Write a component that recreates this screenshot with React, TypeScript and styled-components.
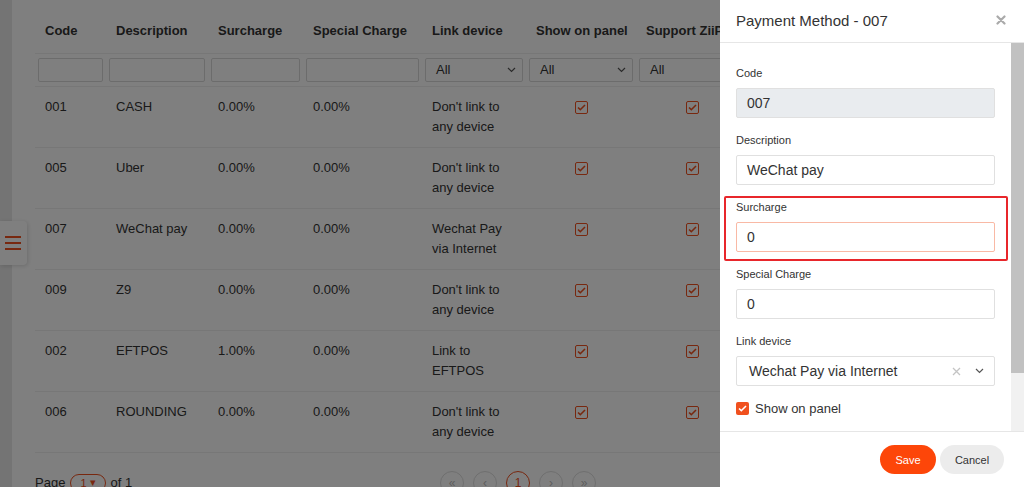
import React from 'react'
import styled, { createGlobalStyle } from 'styled-components'

const GlobalStyle = createGlobalStyle`
  html, body {
    margin: 0;
    padding: 0;
    background: #e8e8e8;
    font-family: 'Liberation Sans', Arial, sans-serif;
    color: #333;
  }
  * { box-sizing: border-box; }
`

const orange = '#f0501e'

interface Row {
  code: string
  description: string
  surcharge: string
  special: string
  link: string
}

const rows: Row[] = [
  { code: '001', description: 'CASH', surcharge: '0.00%', special: '0.00%', link: "Don't link to any device" },
  { code: '005', description: 'Uber', surcharge: '0.00%', special: '0.00%', link: "Don't link to any device" },
  { code: '007', description: 'WeChat pay', surcharge: '0.00%', special: '0.00%', link: 'Wechat Pay via Internet' },
  { code: '009', description: 'Z9', surcharge: '0.00%', special: '0.00%', link: "Don't link to any device" },
  { code: '002', description: 'EFTPOS', surcharge: '1.00%', special: '0.00%', link: 'Link to EFTPOS' },
  { code: '006', description: 'ROUNDING', surcharge: '0.00%', special: '0.00%', link: "Don't link to any device" },
]

const Page = styled.div`
  display: flex;
  height: 487px;
  overflow: hidden;
  padding-left: 12px;
`

const Card = styled.main`
  flex: 1;
  background: #fff;
  padding: 9px 23px 0;
  display: flex;
  flex-direction: column;
  overflow: hidden;
`

const Table = styled.table`
  border-collapse: collapse;
  table-layout: fixed;
  width: 840px;
  font-size: 13px;
`

const HeadCell = styled.th<{ $w: number }>`
  width: ${({ $w }) => $w}px;
  height: 44px;
  padding: 0 10px;
  text-align: left;
  font-weight: 700;
  white-space: nowrap;
  overflow: hidden;
  border-bottom: 1px solid #eee;
`

const FilterCell = styled.td`
  padding: 4px 3px;
  border-bottom: 1px solid #eee;
`

const FilterInput = styled.div`
  height: 24px;
  border: 1px solid #d9d9d9;
  border-radius: 2px;
  background: #fff;
`

const FilterSelect = styled(FilterInput)`
  display: flex;
  align-items: center;
  justify-content: space-between;
  padding: 0 6px 0 10px;
  font-size: 13px;
`

const Cell = styled.td<{ $center?: boolean }>`
  padding: 10px 10px;
  height: 61px;
  line-height: 20px;
  vertical-align: top;
  text-align: ${({ $center }) => ($center ? 'center' : 'left')};
  border-bottom: 1px solid #eee;
`

const OutlineCheck = styled.span`
  display: inline-flex;
  align-items: center;
  justify-content: center;
  width: 13px;
  height: 13px;
  margin-top: 4px;
  border: 1px solid ${orange};
  border-radius: 2px;
  background: #fff;
  vertical-align: top;
`

const Pager = styled.div`
  display: grid;
  grid-template-columns: 1fr auto 1fr;
  align-items: center;
  margin-top: 18px;
  font-size: 13px;
`

const PageInfo = styled.div`
  display: flex;
  align-items: center;
  gap: 5px;
`

const PagePill = styled.span`
  display: inline-flex;
  align-items: center;
  gap: 3px;
  height: 18px;
  padding: 0 9px;
  border: 1px solid ${orange};
  border-radius: 9px;
  color: ${orange};
  font-size: 11px;
`

const PageButtons = styled.div`
  display: flex;
  gap: 9px;
`

const PageButton = styled.span<{ $active?: boolean }>`
  width: 24px;
  height: 24px;
  border-radius: 50%;
  border: 1px solid ${({ $active }) => ($active ? orange : '#ddd')};
  color: ${({ $active }) => ($active ? orange : '#bbb')};
  display: flex;
  align-items: center;
  justify-content: center;
  font-size: 12px;
`

const MenuTab = styled.button`
  position: absolute;
  left: 0;
  top: 221px;
  width: 27px;
  height: 44px;
  border: none;
  border-radius: 0 4px 4px 0;
  background: #fff;
  box-shadow: 1px 1px 4px rgba(0, 0, 0, 0.15);
  display: flex;
  flex-direction: column;
  justify-content: center;
  gap: 4.5px;
  padding: 0 0 0 5px;
`

const MenuLine = styled.span`
  width: 16px;
  height: 1.5px;
  background: ${orange};
`

const Overlay = styled.div`
  position: fixed;
  inset: 0;
  background: rgba(0, 0, 0, 0.5);
`

const Drawer = styled.aside`
  position: fixed;
  top: 0;
  right: 0;
  bottom: 0;
  width: 304px;
  background: #fff;
  display: flex;
  flex-direction: column;
`

const DrawerHeader = styled.header`
  height: 43px;
  flex-shrink: 0;
  display: flex;
  align-items: center;
  justify-content: space-between;
  padding: 0 18px 2px 16px;
  border-bottom: 1px solid #e6e6e6;
  font-size: 15px;
`

const DrawerBody = styled.div`
  flex: 1;
  min-height: 0;
  display: flex;
`

const Form = styled.div`
  flex: 1;
  overflow: hidden;
  padding: 22px 16px 20px;
`

const ScrollTrack = styled.div`
  width: 13px;
  flex-shrink: 0;
  background: #f1f1f1;
`

const ScrollThumb = styled.div`
  height: 330px;
  background: #c1c1c1;
`

const Field = styled.div<{ $marked?: boolean }>`
  position: relative;
  margin-bottom: 14px;
  ${({ $marked }) =>
    $marked &&
    `
    &::after {
      content: '';
      position: absolute;
      top: -3px;
      bottom: -9px;
      left: -12px;
      right: -13px;
      border: 2px solid #e8262b;
      border-radius: 2px;
      pointer-events: none;
    }
  `}
`

const Label = styled.div`
  font-size: 11px;
  line-height: 16px;
  margin-bottom: 7px;
`

const Input = styled.div<{ $disabled?: boolean; $focused?: boolean }>`
  height: 30px;
  display: flex;
  align-items: center;
  padding: 0 10px;
  font-size: 14px;
  border: 1px solid ${({ $focused }) => ($focused ? '#f9b9a5' : '#e0e0e0')};
  border-radius: 2px;
  background: ${({ $disabled }) => ($disabled ? '#e9ecef' : '#fff')};
`

const Select = styled(Input)`
  padding: 0 10px 0 12px;
  gap: 14px;
  & > span:first-child {
    flex: 1;
  }
`

const CheckRow = styled.label`
  display: flex;
  align-items: center;
  gap: 6px;
  height: 16px;
  margin-bottom: 14px;
  font-size: 13px;
`

const FilledCheck = styled.span`
  width: 13px;
  height: 13px;
  border-radius: 2px;
  background: ${orange};
  display: flex;
  align-items: center;
  justify-content: center;
`

const DrawerFooter = styled.footer`
  flex-shrink: 0;
  display: flex;
  justify-content: flex-end;
  gap: 4px;
  padding: 13px 20px 13px;
  border-top: 1px solid #e6e6e6;
`

const Button = styled.button<{ $primary?: boolean }>`
  height: 29px;
  min-width: ${({ $primary }) => ($primary ? 56 : 64)}px;
  border: none;
  border-radius: 15px;
  font-family: inherit;
  font-size: 11px;
  color: ${({ $primary }) => ($primary ? '#fff' : '#333')};
  background: ${({ $primary }) => ($primary ? '#fd4609' : '#ececec')};
`

const Chevron = () => (
  <svg width="9" height="6" viewBox="0 0 9 6">
    <path d="M1 1l3.5 3.5L8 1" fill="none" stroke="#555" strokeWidth="1.2" />
  </svg>
)

const Tick = ({ color }: { color: string }) => (
  <svg width="9" height="7" viewBox="0 0 9 7">
    <path d="M1 3.5l2.3 2.2L8 1" fill="none" stroke={color} strokeWidth="1.6" />
  </svg>
)

const columns = [
  { title: 'Code', w: 71 },
  { title: 'Description', w: 102 },
  { title: 'Surcharge', w: 95 },
  { title: 'Special Charge', w: 119 },
  { title: 'Link device', w: 104 },
  { title: 'Show on panel', w: 110 },
  { title: 'Support ZiiPay', w: 112 },
  { title: 'Active', w: 128 },
]

export default function App() {
  return (
    <>
      <GlobalStyle />
      <Page>
        <Card>
          <Table>
            <thead>
              <tr>
                {columns.map(c => (
                  <HeadCell key={c.title} $w={c.w}>{c.title}</HeadCell>
                ))}
              </tr>
              <tr>
                {columns.map((c, i) => (
                  <FilterCell key={c.title}>
                    {i < 4 ? (
                      <FilterInput />
                    ) : (
                      <FilterSelect>
                        All
                        <Chevron />
                      </FilterSelect>
                    )}
                  </FilterCell>
                ))}
              </tr>
            </thead>
            <tbody>
              {rows.map(r => (
                <tr key={r.code}>
                  <Cell>{r.code}</Cell>
                  <Cell>{r.description}</Cell>
                  <Cell>{r.surcharge}</Cell>
                  <Cell>{r.special}</Cell>
                  <Cell>{r.link}</Cell>
                  <Cell $center>
                    <OutlineCheck><Tick color={orange} /></OutlineCheck>
                  </Cell>
                  <Cell $center>
                    <OutlineCheck><Tick color={orange} /></OutlineCheck>
                  </Cell>
                  <Cell $center>
                    <OutlineCheck><Tick color={orange} /></OutlineCheck>
                  </Cell>
                </tr>
              ))}
            </tbody>
          </Table>
          <Pager>
            <PageInfo>
              Page
              <PagePill>1 <span>▾</span></PagePill>
              of 1
            </PageInfo>
            <PageButtons>
              <PageButton>«</PageButton>
              <PageButton>‹</PageButton>
              <PageButton $active>1</PageButton>
              <PageButton>›</PageButton>
              <PageButton>»</PageButton>
            </PageButtons>
            <span />
          </Pager>
        </Card>
        <MenuTab>
          <MenuLine />
          <MenuLine />
          <MenuLine />
        </MenuTab>
      </Page>
      <Overlay />
      <Drawer>
        <DrawerHeader>
          Payment Method - 007
          <svg width="10" height="10" viewBox="0 0 10 10">
            <path d="M1.5 1.5l7 7M8.5 1.5l-7 7" stroke="#aaa" strokeWidth="2.2" strokeLinecap="round" />
          </svg>
        </DrawerHeader>
        <DrawerBody>
          <Form>
            <Field>
              <Label>Code</Label>
              <Input $disabled>007</Input>
            </Field>
            <Field>
              <Label>Description</Label>
              <Input>WeChat pay</Input>
            </Field>
            <Field $marked>
              <Label>Surcharge</Label>
              <Input $focused>0</Input>
            </Field>
            <Field>
              <Label>Special Charge</Label>
              <Input>0</Input>
            </Field>
            <Field>
              <Label>Link device</Label>
              <Select>
                <span>Wechat Pay via Internet</span>
                <svg width="9" height="9" viewBox="0 0 9 9">
                  <path d="M1 1l7 7M8 1l-7 7" stroke="#c4c4c4" strokeWidth="1.3" />
                </svg>
                <Chevron />
              </Select>
            </Field>
            <CheckRow>
              <FilledCheck><Tick color="#fff" /></FilledCheck>
              Show on panel
            </CheckRow>
            <CheckRow>
              <FilledCheck><Tick color="#fff" /></FilledCheck>
              Support ZiiPay
            </CheckRow>
          </Form>
          <ScrollTrack>
            <ScrollThumb />
          </ScrollTrack>
        </DrawerBody>
        <DrawerFooter>
          <Button $primary>Save</Button>
          <Button>Cancel</Button>
        </DrawerFooter>
      </Drawer>
    </>
  )
}
